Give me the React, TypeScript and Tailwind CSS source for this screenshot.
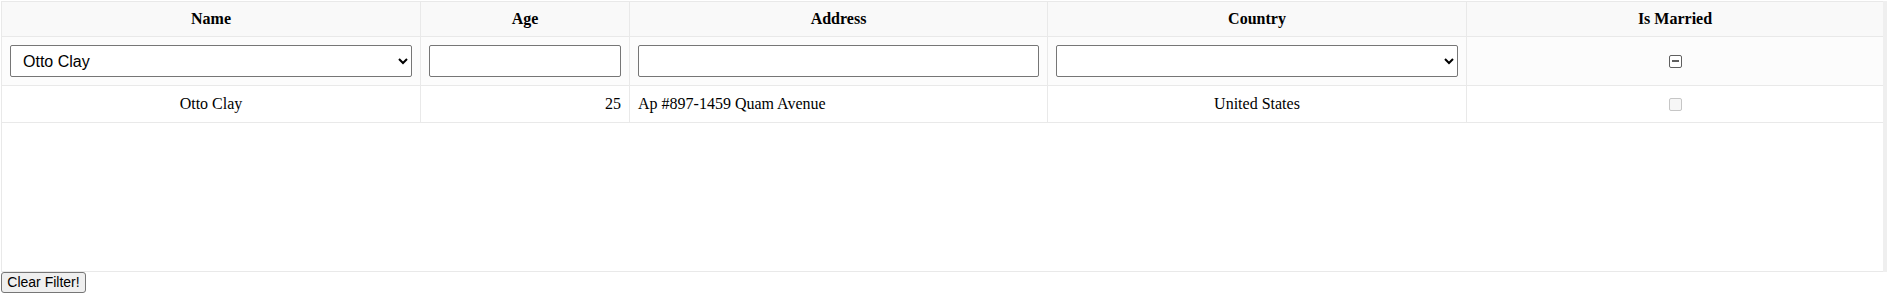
const row = "grid grid-cols-[419px_209px_418px_419px_1fr]";
const line = "border-[#e9e9e9]";

// indeterminate checkbox as the reference draws it (grey box, dark dash)
function MixedCheckbox() {
  return (
    <span className="w-[13px] h-[13px] flex items-center justify-center bg-white border border-[#5f5f5f] rounded-[2px]">
      <span className="w-[7px] h-[2px] bg-[#5f5f5f]" />
    </span>
  );
}

export default function App() {
  const headers = ["Name", "Age", "Address", "Country", "Is Married"];

  return (
    <div className="pt-px pl-px bg-white text-black font-['Liberation_Serif',serif] text-[16px]">
      <div className="flex h-[271px]">
        <div className={`flex-1 flex flex-col border-t border-l border-b ${line}`}>
          {/* header */}
          <div className={row}>
            {headers.map((h, i) => (
              <div
                key={h}
                className={`h-[35px] flex items-center justify-center font-bold bg-[#f9f9f9] border-b ${line} ${i < 4 ? "border-r" : ""}`}
              >
                {h}
              </div>
            ))}
          </div>

          {/* filter row */}
          <div className={`${row} bg-[#fcfcfc]`}>
            <div className={`h-[49px] p-2 border-r border-b ${line}`}>
              <select
                defaultValue="Otto Clay"
                className="w-full h-[32px] pl-2 bg-white border border-[#767676] rounded-[2px] font-['Liberation_Sans',Arial,sans-serif] text-[16px]"
              >
                <option value=""></option>
                <option value="Otto Clay">Otto Clay</option>
              </select>
            </div>
            <div className={`h-[49px] p-2 border-r border-b ${line}`}>
              <input type="number" className="w-full h-[32px] bg-white border border-[#767676] rounded-[2px]" />
            </div>
            <div className={`h-[49px] p-2 border-r border-b ${line}`}>
              <input type="text" className="w-full h-[32px] bg-white border border-[#767676] rounded-[2px]" />
            </div>
            <div className={`h-[49px] p-2 border-r border-b ${line}`}>
              <select
                defaultValue=""
                className="w-full h-[32px] pl-2 bg-white border border-[#767676] rounded-[2px] font-['Liberation_Sans',Arial,sans-serif] text-[16px]"
              >
                <option value=""></option>
                <option value="United States">United States</option>
              </select>
            </div>
            <div className={`h-[49px] flex items-center justify-center border-b ${line}`}>
              <MixedCheckbox />
            </div>
          </div>

          {/* data row */}
          <div className={`${row} bg-white`}>
            <div className={`h-[37px] px-2 flex items-center justify-center border-r border-b ${line}`}>Otto Clay</div>
            <div className={`h-[37px] px-2 flex items-center justify-end border-r border-b ${line}`}>25</div>
            <div className={`h-[37px] px-2 flex items-center border-r border-b ${line}`}>Ap #897-1459 Quam Avenue</div>
            <div className={`h-[37px] px-2 flex items-center justify-center border-r border-b ${line}`}>United States</div>
            <div className={`h-[37px] flex items-center justify-center border-b ${line}`}>
              <span className="w-[13px] h-[13px] bg-[#f7f7f7] border border-[#c6c6c6] rounded-[2px]" />
            </div>
          </div>

          <div className="flex-1 bg-white" />
        </div>
        <div className="w-[4px] bg-[#efefef]" />
      </div>

      <button className="w-[85px] h-[21px] flex items-center justify-center bg-[#efefef] border border-[#767676] rounded-[3px] font-['Liberation_Sans',Arial,sans-serif] text-[14px]">
        Clear Filter!
      </button>
    </div>
  );
}
